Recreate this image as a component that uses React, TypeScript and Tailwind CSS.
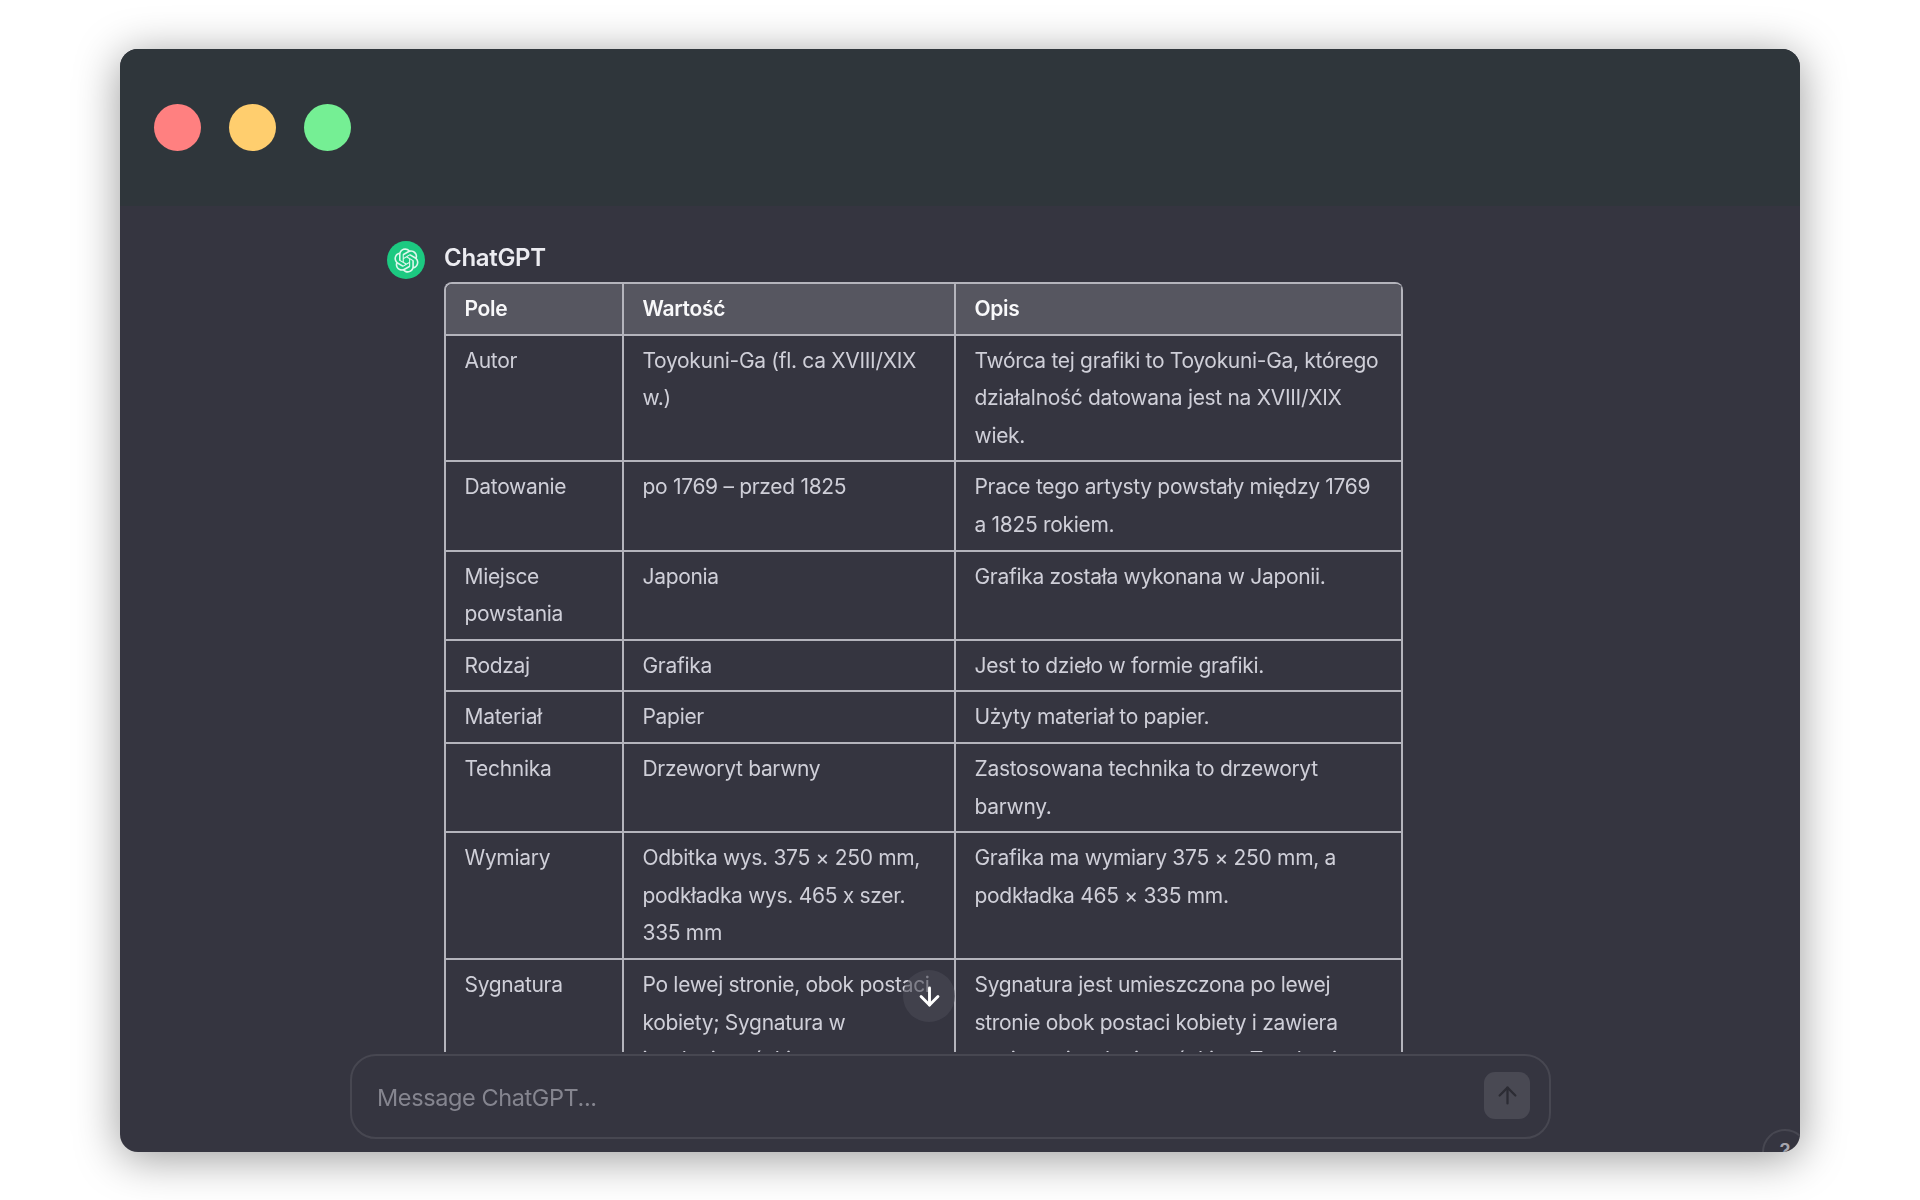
import React from 'react';
import { ArrowDown, ArrowUp } from 'lucide-react';

const rows: [string, string, string][] = [
  ['Autor', 'Toyokuni-Ga (fl. ca XVIII/XIX w.)', 'Twórca tej grafiki to Toyokuni-Ga, którego działalność datowana jest na XVIII/XIX wiek.'],
  ['Datowanie', 'po 1769 – przed 1825', 'Prace tego artysty powstały między 1769 a 1825 rokiem.'],
  ['Miejsce powstania', 'Japonia', 'Grafika została wykonana w Japonii.'],
  ['Rodzaj', 'Grafika', 'Jest to dzieło w formie grafiki.'],
  ['Materiał', 'Papier', 'Użyty materiał to papier.'],
  ['Technika', 'Drzeworyt barwny', 'Zastosowana technika to drzeworyt barwny.'],
  ['Wymiary', 'Odbitka wys. 375 × 250 mm, podkładka wys. 465 x szer. 335 mm', 'Grafika ma wymiary 375 × 250 mm, a podkładka 465 × 335 mm.'],
  ['Sygnatura', 'Po lewej stronie, obok postaci kobiety; Sygnatura w\njęzyku japońskim', 'Sygnatura jest umieszczona po lewej stronie obok postaci kobiety i zawiera napisy w języku japońskim: „Toyokuni\nGa”'],
];

const OpenAILogo = () => (
  <svg viewBox="0 0 41 41" className="h-[25px] w-[25px]" fill="#ffffff" fillOpacity={0.85}>
    <path d="M37.5324 16.8707C37.9808 15.5241 38.1363 14.0974 37.9886 12.6859C37.8409 11.2744 37.3934 9.91076 36.676 8.68622C35.6126 6.83404 33.9882 5.3676 32.0373 4.4985C30.0864 3.62941 27.9098 3.40259 25.8215 3.85078C24.8796 2.7893 23.7219 1.94125 22.4257 1.36341C21.1295 0.785575 19.7249 0.491269 18.3058 0.500197C16.1708 0.495044 14.0893 1.16803 12.3614 2.42214C10.6335 3.67624 9.34853 5.44666 8.6917 7.47815C7.30085 7.76286 5.98686 8.3414 4.8377 9.17505C3.68854 10.0087 2.73073 11.0782 2.02839 12.312C0.956464 14.1591 0.498905 16.2988 0.721698 18.4228C0.944492 20.5467 1.83612 22.5449 3.268 24.1293C2.81966 25.4759 2.66413 26.9026 2.81182 28.3141C2.95951 29.7256 3.40701 31.0892 4.12437 32.3138C5.18791 34.1659 6.8123 35.6322 8.76321 36.5013C10.7141 37.3704 12.8907 37.5973 14.9789 37.1492C15.9208 38.2107 17.0786 39.0587 18.3747 39.6366C19.6709 40.2144 21.0755 40.5087 22.4946 40.4998C24.6307 40.5054 26.7133 39.8321 28.4418 38.5772C30.1704 37.3223 31.4556 35.5506 32.1119 33.5179C33.5027 33.2332 34.8167 32.6547 35.9659 31.821C37.115 30.9874 38.0728 29.9178 38.7752 28.684C39.8458 26.8371 40.3023 24.6979 40.0789 22.5748C39.8556 20.4517 38.9639 18.4544 37.5324 16.8707ZM22.4978 37.8849C20.7443 37.8874 19.0459 37.2733 17.6994 36.1501C17.7601 36.117 17.8666 36.0586 17.936 36.0161L25.9004 31.4156C26.1003 31.3019 26.2663 31.137 26.3813 30.9378C26.4964 30.7386 26.5563 30.5124 26.5549 30.2825V19.0542L29.9213 20.998C29.9389 21.0068 29.9541 21.0198 29.9656 21.0359C29.977 21.052 29.9842 21.0707 29.9867 21.0902V30.3889C29.9842 32.375 29.1946 34.2791 27.7909 35.6841C26.3872 37.0892 24.4838 37.8806 22.4978 37.8849ZM6.39227 31.0064C5.51397 29.4888 5.19742 27.7107 5.49804 25.9832C5.55718 26.0187 5.66048 26.0818 5.73461 26.1244L13.699 30.7248C13.8975 30.8408 14.1233 30.902 14.3532 30.902C14.583 30.902 14.8088 30.8408 15.0073 30.7248L24.731 25.1103V28.9979C24.7321 29.0177 24.7283 29.0376 24.7199 29.0556C24.7115 29.0736 24.6988 29.0893 24.6829 29.1012L16.6317 33.7497C14.9096 34.7416 12.8643 35.0097 10.9447 34.4954C9.02506 33.9811 7.38785 32.7263 6.39227 31.0064ZM4.29707 13.6194C5.17156 12.0998 6.55279 10.9364 8.19885 10.3327C8.19885 10.4013 8.19491 10.5228 8.19491 10.6071V19.808C8.19351 20.0378 8.25334 20.2638 8.36823 20.4629C8.48312 20.6619 8.64893 20.8267 8.84863 20.9404L18.5723 26.5542L15.206 28.4979C15.1894 28.5089 15.1703 28.5155 15.1505 28.5173C15.1307 28.5191 15.1107 28.516 15.0924 28.5082L7.04046 23.8557C5.32135 22.8601 4.06716 21.2235 3.55289 19.3046C3.03862 17.3858 3.30624 15.3413 4.29707 13.6194ZM31.955 20.0556L22.2312 14.4411L25.5976 12.4981C25.6142 12.4872 25.6333 12.4805 25.6531 12.4787C25.6729 12.4769 25.6928 12.4801 25.7111 12.4879L33.7631 17.1364C34.9967 17.849 36.0017 18.8982 36.6606 20.1613C37.3194 21.4244 37.6047 22.849 37.4832 24.2684C37.3617 25.6878 36.8382 27.0432 35.9743 28.1759C35.1103 29.3086 33.9415 30.1717 32.6047 30.6641C32.6047 30.5947 32.6047 30.4733 32.6047 30.3889V21.188C32.6066 20.9586 32.5474 20.7328 32.4332 20.5338C32.319 20.3348 32.154 20.1698 31.955 20.0556ZM35.3055 15.0128C35.2464 14.9765 35.1431 14.9142 35.069 14.8717L27.1045 10.2712C26.906 10.1554 26.6803 10.0943 26.4504 10.0943C26.2206 10.0943 25.9948 10.1554 25.7963 10.2712L16.0726 15.8858V11.9982C16.0715 11.9783 16.0753 11.9585 16.0837 11.9405C16.0921 11.9225 16.1048 11.9068 16.1207 11.8949L24.1719 7.25025C25.4053 6.53903 26.8158 6.19376 28.2383 6.25482C29.6608 6.31589 31.0364 6.78077 32.2044 7.59508C33.3723 8.40939 34.2842 9.53945 34.8334 10.8531C35.3826 12.1667 35.5464 13.6095 35.3055 15.0128ZM14.2424 21.9419L10.8752 19.9981C10.8576 19.9893 10.8423 19.9763 10.8309 19.9602C10.8195 19.9441 10.8122 19.9254 10.8098 19.9058V10.6071C10.8107 9.18295 11.2173 7.78848 11.9819 6.58696C12.7466 5.38544 13.8377 4.42659 15.1275 3.82264C16.4173 3.21869 17.8524 2.99464 19.2649 3.1767C20.6775 3.35876 22.0089 3.93941 23.1034 4.85067C23.0427 4.88379 22.937 4.94215 22.8668 4.98473L14.9024 9.58517C14.7025 9.69878 14.5366 9.86356 14.4215 10.0626C14.3065 10.2616 14.2466 10.4877 14.2479 10.7175L14.2424 21.9419ZM16.071 17.9991L20.4018 15.4978L24.7325 17.9975V22.9985L20.4018 25.4983L16.071 22.9985V17.9991Z" />
  </svg>
);

const App: React.FC = () => {
  return (
    <div className="h-[1200px] overflow-hidden bg-white pt-[49px] pl-[120px] font-['Inter',sans-serif]">
      <div className="relative flex h-[1103px] w-[1680px] flex-col overflow-hidden rounded-[18px] bg-[#353540] shadow-[0_6px_45px_rgba(0,0,0,0.4)]">
        {/* Title bar */}
        <div className="flex h-[157px] shrink-0 items-center gap-[28px] bg-[#2f363b] pl-[34px]">
          <div className="h-[47px] w-[47px] rounded-full bg-[#ff8080]" />
          <div className="h-[47px] w-[47px] rounded-full bg-[#ffce6e]" />
          <div className="h-[47px] w-[47px] rounded-full bg-[#75ef94]" />
        </div>

        {/* Conversation */}
        <div className="relative h-[846px] shrink-0 overflow-hidden pt-[35px] pl-[267px] blur-[0.7px]">
          <div className="flex gap-[19px]">
            <div className="flex h-[38px] w-[38px] shrink-0 items-center justify-center rounded-full bg-[#1cc981]">
              <OpenAILogo />
            </div>
            <div className="w-[960px]">
              <div className="h-[41px] pt-[1px] text-[24px] leading-[32px] font-semibold tracking-[-0.3px] text-[#ececf1]">ChatGPT</div>
              <table className="w-[959px] table-fixed border-separate border-spacing-0 overflow-hidden rounded-t-[8px] border-t-2 border-l-2 border-[#b4b4bc] text-[21px] leading-[37.6px] tracking-[-0.31px] text-[#cfcfd8]">
                <colgroup>
                  <col className="w-[178px]" />
                  <col className="w-[332px]" />
                  <col />
                </colgroup>
                <thead>
                  <tr className="bg-[#565660] font-semibold text-[#f8f8fa]">
                    <th className="border-r-2 border-b-2 border-[#b4b4bc] px-[18.5px] py-[6px] text-left font-semibold">Pole</th>
                    <th className="border-r-2 border-b-2 border-[#b4b4bc] px-[18.5px] py-[6px] text-left font-semibold">Wartość</th>
                    <th className="border-r-2 border-b-2 border-[#b4b4bc] px-[18.5px] py-[6px] text-left font-semibold">Opis</th>
                  </tr>
                </thead>
                <tbody>
                  {rows.map((row) => (
                    <tr key={row[0]}>
                      {row.map((cell, i) => (
                        <td key={i} className="border-r-2 border-b-2 border-[#b4b4bc] px-[18.5px] py-[6px] align-top whitespace-pre-line">
                          {cell}
                        </td>
                      ))}
                    </tr>
                  ))}
                </tbody>
              </table>
            </div>
          </div>
        </div>

        {/* Scroll to bottom */}
        <div className="absolute top-[921px] left-[783px] flex h-[52px] w-[52px] items-center justify-center rounded-full bg-[#4a4a55]/60">
          <ArrowDown className="h-[29px] w-[29px] text-white" strokeWidth={2.4} />
        </div>

        {/* Composer */}
        <div className="mt-[2px] ml-[230px] flex h-[85px] w-[1201px] shrink-0 items-center justify-between rounded-[26px] border-2 border-[#474751] bg-[#353540] pr-[19px] pl-[25px] blur-[0.4px]">
          <span className="pt-[3px] text-[23.5px] tracking-[-0.4px] text-[#85858f]">Message ChatGPT...</span>
          <div className="mb-[2px] flex h-[47px] w-[46px] items-center justify-center rounded-[11px] bg-[#494953]">
            <ArrowUp className="h-[27px] w-[27px] text-[#2c2c34]" strokeWidth={2} />
          </div>
        </div>

        {/* Help button, cut off by the window */}
        <div className="absolute top-[1080px] left-[1642px] flex h-[46px] w-[46px] justify-center rounded-full border-2 border-[#474751] pt-[8px] text-[20px] leading-[24px] font-semibold text-[#a5a5ae]">
          ?
        </div>
      </div>
    </div>
  );
};

export default App;
